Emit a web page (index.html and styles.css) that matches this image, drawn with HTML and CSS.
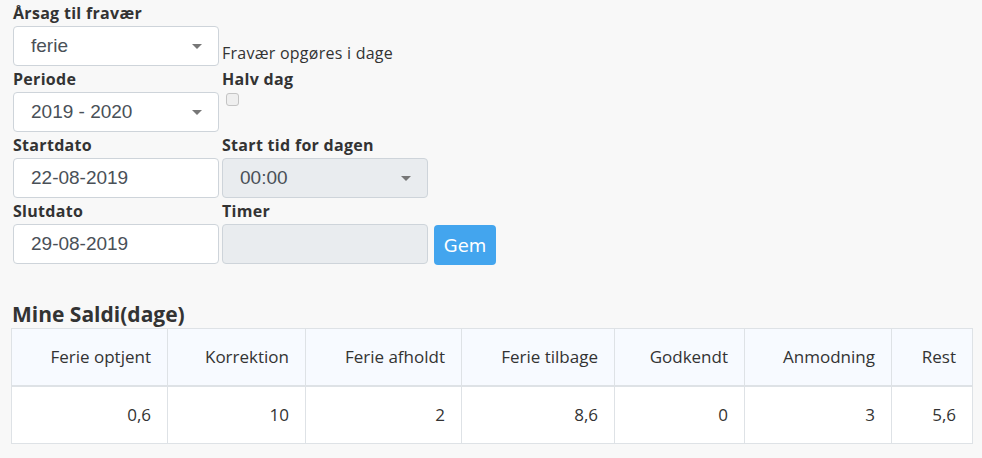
FILE: index.html
```html
<!DOCTYPE html>
<html lang="da">
<head>
<meta charset="utf-8">
<title>Fravær</title>
<link rel="stylesheet" href="styles.css">
</head>
<body>
<div class="page">
  <form class="form">
    <div class="row">
      <div class="group">
        <label class="lbl">Årsag til fravær</label>
        <div class="select"><span>ferie</span><i class="caret"></i></div>
      </div>
      <div class="group end">
        <span class="note">Fravær opgøres i dage</span>
      </div>
    </div>
    <div class="row">
      <div class="group">
        <label class="lbl">Periode</label>
        <div class="select"><span>2019 - 2020</span><i class="caret"></i></div>
      </div>
      <div class="group">
        <label class="lbl">Halv dag</label>
        <span class="check"></span>
      </div>
    </div>
    <div class="row">
      <div class="group">
        <label class="lbl">Startdato</label>
        <div class="input"><span>22-08-2019</span></div>
      </div>
      <div class="group">
        <label class="lbl">Start tid for dagen</label>
        <div class="select disabled"><span>00:00</span><i class="caret"></i></div>
      </div>
    </div>
    <div class="row">
      <div class="group">
        <label class="lbl">Slutdato</label>
        <div class="input"><span>29-08-2019</span></div>
      </div>
      <div class="group">
        <label class="lbl">Timer</label>
        <div class="with-btn">
          <div class="input disabled"></div>
          <button type="button" class="btn">Gem</button>
        </div>
      </div>
    </div>
  </form>

  <h2 class="title">Mine Saldi(dage)</h2>
  <table class="saldi">
    <thead>
      <tr>
        <th class="c1">Ferie optjent</th>
        <th class="c2">Korrektion</th>
        <th class="c3">Ferie afholdt</th>
        <th class="c4">Ferie tilbage</th>
        <th class="c5">Godkendt</th>
        <th class="c6">Anmodning</th>
        <th class="c7">Rest</th>
      </tr>
    </thead>
    <tbody>
      <tr>
        <td>0,6</td>
        <td>10</td>
        <td>2</td>
        <td>8,6</td>
        <td>0</td>
        <td>3</td>
        <td>5,6</td>
      </tr>
    </tbody>
  </table>
</div>
</body>
</html>
```
FILE: styles.css
```css
* { box-sizing: border-box; }
html, body { margin: 0; padding: 0; }
body {
  background: #f8f8f8;
  font-family: "Open Sans", "Noto Sans", sans-serif;
  font-size: 16px;
  color: #333;
}
.page { padding: 0 10px 0 11px; }
.form { padding-left: 2px; }
.row { display: flex; gap: 3px; }
.group { width: 206px; display: flex; flex-direction: column; }
.group.end { justify-content: flex-end; padding-bottom: 2px; }
.lbl {
  font-weight: 700;
  font-size: 16px;
  line-height: 22px;
  letter-spacing: 0.3px;
  padding-top: 2px;
  margin-bottom: 2px;
  display: block;
  white-space: nowrap;
}
.note { line-height: 22px; font-size: 16px; letter-spacing: 0.25px; white-space: nowrap; }
.select, .input {
  height: 40px;
  background: #fff;
  border: 1px solid #ced4da;
  border-radius: 4px;
  display: flex;
  align-items: center;
  justify-content: space-between;
  padding: 0 16px 0 17px;
  font-family: "Liberation Sans", Arial, sans-serif;
  font-size: 19px;
  color: #495057;
}
.disabled { background: #e9ecef; }
.caret {
  width: 0; height: 0;
  border-left: 5px solid transparent;
  border-right: 5px solid transparent;
  border-top: 5px solid #777;
}
.check {
  width: 13px; height: 13px;
  margin: 1px 0 0 4px;
  border: 1px solid #c4c4c4;
  border-radius: 3px;
  background: #efefef;
}
.with-btn { display: flex; gap: 6px; width: 280px; }
.with-btn .input { width: 206px; flex: none; }
.btn {
  height: 40px;
  width: 62px;
  margin-top: 1px;
  border: none;
  border-radius: 4px;
  background: #43a5ee;
  color: #fff;
  font-family: "DejaVu Sans", sans-serif;
  font-size: 18px;
  padding: 0;
}
.title {
  font-size: 21px;
  font-weight: 700;
  margin: 37px 0 1px 1px;
  line-height: 25px;
}
.saldi {
  border-collapse: collapse;
  table-layout: fixed;
  width: 961px;
  background: #fff;
}
.saldi th, .saldi td {
  border: 1px solid #dee2e6;
  text-align: right;
  padding: 16px 16px 16px 8px;
  line-height: 24px;
  font-size: 17px;
  color: #333;
}
.saldi th { font-weight: 400; background: #f7faff; border-bottom-width: 2px; }
.c1 { width: 156px; }
.c2 { width: 138px; }
.c3 { width: 156px; }
.c4 { width: 153px; }
.c5 { width: 130px; }
.c6 { width: 147px; }
.c7 { width: 81px; }
```
